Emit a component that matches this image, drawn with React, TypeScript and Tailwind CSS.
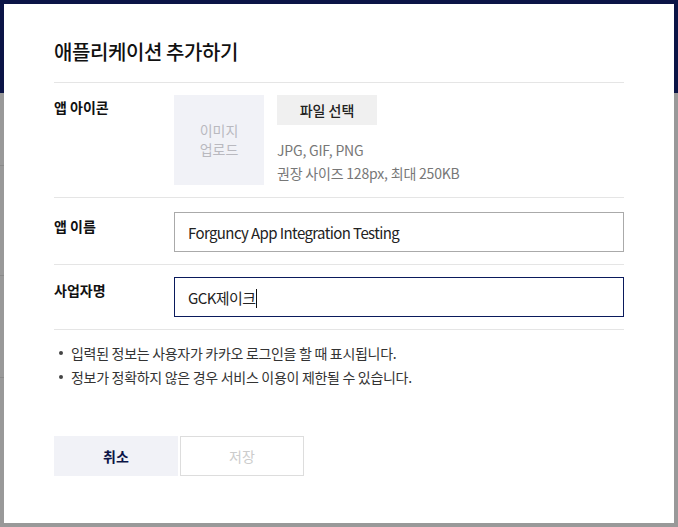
const font = { fontFamily: '"Noto Sans CJK KR", "Noto Sans", sans-serif' };

function Row({ label, children, labelClass }: { label: string; children: React.ReactNode; labelClass: string }) {
  return (
    <div className="flex border-b border-[#e5e5e5]">
      <div className={`w-[120px] shrink-0 text-[14px] font-bold leading-5 text-[#111] ${labelClass}`}>{label}</div>
      <div className="flex-1">{children}</div>
    </div>
  );
}

export default function App() {
  return (
    <div className="relative h-[527px] w-full overflow-hidden bg-[#999999]" style={font}>
      <div className="h-[93px] bg-[#0b1446]" />
      <div className="flex flex-col">
        <div className="mt-[72px] h-px w-1 bg-[#8a8a8a]" />
        <div className="mt-[109px] h-px w-1 bg-[#8a8a8a]" />
        <div className="mt-[101px] h-px w-1 bg-[#8a8a8a]" />
      </div>

      <div className="absolute left-1 top-1 flex h-[519px] w-[670px] flex-col bg-white px-[50px] pt-[34px]">
        <div className="border-b border-[#e5e5e5] pb-4">
          <h1 className="text-[20px] font-medium leading-7 tracking-[-0.4px] text-[#111]">애플리케이션 추가하기</h1>
        </div>

        <Row label="앱 아이콘" labelClass="mt-[14px]">
          <div className="flex gap-[13px] py-3">
            <div className="flex h-[90px] w-[90px] items-center justify-center bg-[#f1f2f7] text-center text-[14px] leading-[19px] text-[#b9b9bf]">
              이미지
              <br />
              업로드
            </div>
            <div className="flex flex-col">
              <button type="button" className="h-[30px] w-[100px] bg-[#f0f0f0] text-[14px] font-medium text-[#222]">
                파일 선택
              </button>
              <div className="mt-[14px] text-[14px] leading-[23px] tracking-[-0.2px] text-[#777]">
                <div>JPG, GIF, PNG</div>
                <div>권장 사이즈 128px, 최대 250KB</div>
              </div>
            </div>
          </div>
        </Row>

        <Row label="앱 이름" labelClass="mt-[18px]">
          <div className="pb-3 pt-[14px]">
            <div className="flex h-10 items-center border border-[#aaaaaa] px-[13px] pt-[2px] text-[15px] tracking-[-0.6px] text-[#222]">
              Forguncy App Integration Testing
            </div>
          </div>
        </Row>

        <Row label="사업자명" labelClass="mt-[15px]">
          <div className="py-3">
            <div className="flex h-10 items-center border border-[#0a1a5c] px-[13px] pt-[2px] text-[15px] tracking-[-0.6px] text-[#222]">
              GCK제이크
              <span className="ml-px inline-block h-[19px] w-px bg-[#111]" />
            </div>
          </div>
        </Row>

        <ul className="pt-[11px] text-[14px] leading-6 tracking-[-0.3px] text-[#333]">
          <li className="flex items-center">
            <span className="mr-[8px] ml-[5px] h-[4px] w-[4px] rounded-full bg-[#444]" />
            입력된 정보는 사용자가 카카오 로그인을 할 때 표시됩니다.
          </li>
          <li className="flex items-center">
            <span className="mr-[8px] ml-[5px] h-[4px] w-[4px] rounded-full bg-[#444]" />
            정보가 정확하지 않은 경우 서비스 이용이 제한될 수 있습니다.
          </li>
        </ul>

        <div className="mt-[47px] flex gap-[2px]">
          <button type="button" className="h-10 w-[124px] bg-[#f1f2f7] text-[14px] font-bold text-[#0b1446]">
            취소
          </button>
          <button type="button" className="h-10 w-[124px] border border-[#dddddd] bg-white text-[14px] text-[#cccccc]">
            저장
          </button>
        </div>
      </div>
    </div>
  );
}
